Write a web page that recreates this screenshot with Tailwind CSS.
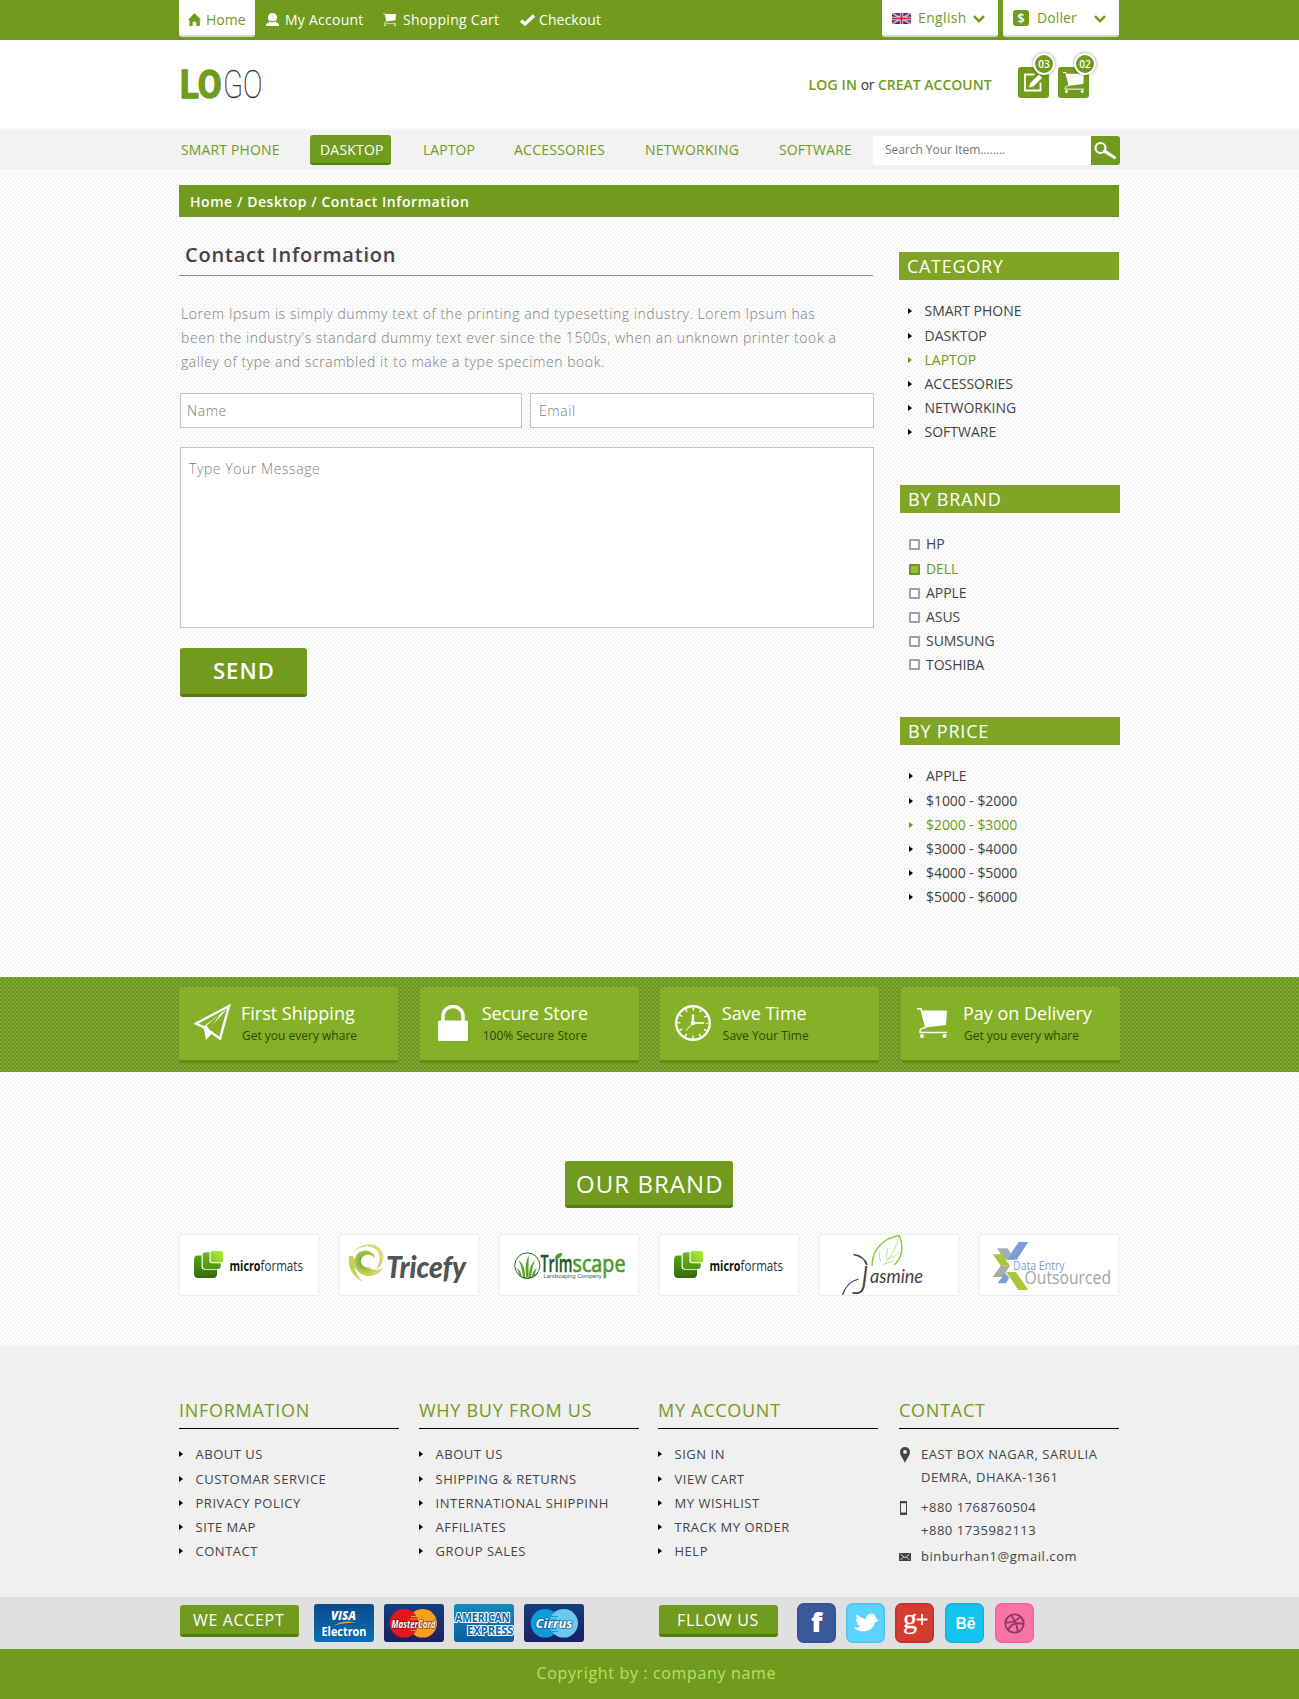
<!DOCTYPE html>
<html lang="en">
<head>
<meta charset="utf-8">
<title>Contact Information</title>
<script src="https://cdn.jsdelivr.net/npm/@tailwindcss/browser@4"></script>
</head>
<body class="font-['Open_Sans',sans-serif] text-sm text-[#444] whitespace-nowrap overflow-x-hidden bg-[#fefefe] bg-[radial-gradient(circle_at_1px_1px,#f3f3f3_0.9px,transparent_1px),radial-gradient(circle_at_1px_1px,#f7f7f7_0.9px,transparent_1px)] bg-[length:4px_4px] bg-[position:0_0,2px_2px]">

<svg class="absolute w-0 h-0">
  <symbol id="cart" viewBox="0 0 30 30">
    <path d="M0 .8h4l5 19" fill="none" stroke="currentColor" stroke-width="1.6"/>
    <path d="M4.5 2.5H30L29 17 8.5 19.5z" fill="currentColor"/>
    <path d="M8.500 19.500C4 20 2.500 22 3 24.500H30" fill="none" stroke="currentColor" stroke-width="1.4"/>
    <circle cx="5" cy="28" r="2" fill="currentColor"/><circle cx="27.500" cy="28" r="2" fill="currentColor"/>
  </symbol>
  <symbol id="arrow" viewBox="0 0 4 6"><path d="M0 0 4 3 0 6z" fill="currentColor"/></symbol>
  <symbol id="chevron" viewBox="0 0 12 8"><path d="M1 1.200 6 6.200 11 1.200" fill="none" stroke="currentColor" stroke-width="2.400"/></symbol>
  <symbol id="microformats" viewBox="0 0 140 62">
    <rect x="15" y="21.500" width="23" height="22.500" rx="4" fill="url(#mf1)"/>
    <rect x="22.500" y="17.300" width="20" height="18.500" rx="3.500" fill="#fff"/>
    <rect x="23.700" y="18.300" width="18" height="16.700" rx="3" fill="url(#mf2)"/>
    <rect x="30.500" y="16" width="14.500" height="13.300" rx="2" fill="#fff"/>
    <rect x="31.700" y="17" width="12.300" height="11.300" rx="1.500" fill="url(#mf3)"/>
    <text x="50.500" y="36.700" font-family="Open Sans" font-size="14" font-weight="700" fill="#111" textLength="31" lengthAdjust="spacingAndGlyphs">micro</text>
    <text x="81.500" y="36.700" font-family="Open Sans" font-size="14" fill="#333" textLength="42.500" lengthAdjust="spacingAndGlyphs">formats</text>
  </symbol>
  <defs>
    <linearGradient id="mf1" x1="0" y1="0" x2="0" y2="1"><stop offset="0" stop-color="#5aa314"/><stop offset="1" stop-color="#34690a"/></linearGradient>
    <linearGradient id="mf2" x1="0" y1="0" x2="0" y2="1"><stop offset="0" stop-color="#6fb81a"/><stop offset="1" stop-color="#4b9310"/></linearGradient>
    <linearGradient id="mf3" x1="1" y1="0" x2="0" y2="1"><stop offset="0" stop-color="#b9f13c"/><stop offset="1" stop-color="#7fc81c"/></linearGradient>
    <radialGradient id="swirl" gradientUnits="userSpaceOnUse" cx="26" cy="27" r="20"><stop offset="0" stop-color="#4c9a3c"/><stop offset=".55" stop-color="#b9c94a"/><stop offset="1" stop-color="#e6e08c"/></radialGradient>
    <linearGradient id="visa" x1="0" y1="0" x2="0" y2="1"><stop offset="0" stop-color="#0b4a8c"/><stop offset="1" stop-color="#0a6fb4"/></linearGradient>
    <linearGradient id="navy" x1="0" y1="0" x2="0" y2="1"><stop offset="0" stop-color="#123f7e"/><stop offset="1" stop-color="#1d1f63"/></linearGradient>
    <linearGradient id="amex" x1="0" y1="0" x2="0" y2="1"><stop offset="0" stop-color="#1689bd"/><stop offset="1" stop-color="#0b5c9e"/></linearGradient>
  </defs>
</svg>

<!-- top bar -->
<div class="h-10 bg-[#709b1d]">
  <div class="mx-auto w-[941px] flex items-start text-white leading-[39px]">
    <a class="flex w-[76px] h-[37px] pl-[9px] rounded-b-[3px] border-b-2 border-[#d6d6d6] bg-white text-[#709b1d]">
      <svg class="mt-[13px] w-[13px] h-[13px]" viewBox="0 0 13 13"><path d="M6.500 0 13 7h-1.200v6H8.300V8.700H4.700V13H1.500V7H0z" fill="currentColor"/></svg>
      <span class="ml-[5px]">Home</span>
    </a>
    <a class="flex w-[117px] pl-[11px]">
      <svg class="mt-[13px] w-[13px] h-[13px]" viewBox="0 0 13 13"><path d="M6.500 0C3.600 0 2 2 2 4.500c0 1.800.7 3.300 1.900 4.200L0 11v2h13v-2L9.100 8.700C10.300 7.800 11 6.300 11 4.500 11 2 9.400 0 6.500 0z" fill="currentColor"/><path d="M3.300 6.500c1 2.300 5.400 2.300 6.400 0-.4 4-6 4-6.400 0z" fill="#709b1d"/></svg>
      <span class="ml-[6px] tracking-[.25px]">My Account</span>
    </a>
    <a class="flex w-[137px] pl-[11px]">
      <svg class="mt-[13px] w-[13px] h-[13px]"><use href="#cart"/></svg>
      <span class="ml-[7px] tracking-[.3px]">Shopping Cart</span>
    </a>
    <a class="flex w-[373px] pl-[11px]">
      <svg class="mt-[14px] w-[15px] h-[12px]" viewBox="0 0 15 12"><path d="M1 6.500 5 10 14 1.500" fill="none" stroke="currentColor" stroke-width="3.400"/></svg>
      <span class="ml-[4px] tracking-[.1px]">Checkout</span>
    </a>
    <div class="flex w-[116px] h-[37px] pl-[10px] rounded-b-[3px] border-b-2 border-[#d6d6d6] bg-white text-[#709b1d] leading-[35px]">
      <svg class="mt-[13px] w-[19px] h-[11px]" viewBox="0 0 19 11"><path fill="#2a2f7a" d="M0 0h19v11H0z"/><path d="M0 0 19 11M19 0 0 11" stroke="#fff" stroke-width="1.800"/><path d="M0 0 19 11M19 0 0 11" stroke="#d3203c" stroke-width=".7"/><path d="M9.500 0v11M0 5.500h19" stroke="#fff" stroke-width="3.400"/><path d="M9.500 0v11M0 5.500h19" stroke="#d3203c" stroke-width="2"/></svg>
      <span class="ml-[7px] tracking-[.35px]">English</span>
      <svg class="ml-[6px] mt-[15px] w-[12px] h-[8px]"><use href="#chevron"/></svg>
    </div>
    <div class="flex ml-[5px] w-[116px] h-[37px] pl-[10px] rounded-b-[3px] border-b-2 border-[#d6d6d6] bg-white text-[#709b1d] leading-[35px]">
      <span class="mt-[10px] w-4 h-4 rounded-[3px] bg-[#709b1d] text-white text-[13px] font-semibold leading-4 text-center">$</span>
      <span class="ml-[8px] w-[57px] tracking-[.1px]">Doller</span>
      <svg class="mt-[15px] w-[12px] h-[8px]"><use href="#chevron"/></svg>
    </div>
  </div>
</div>

<!-- header -->
<header class="h-[87px] bg-white">
  <div class="mx-auto w-[941px] flex items-start">
    <svg class="mt-[24px] w-[90px] h-[40px] overflow-visible" viewBox="0 0 90 40">
      <g font-family="Roboto" font-size="39" stroke-linejoin="round">
        <text x="1" y="34" font-weight="700" fill="#709b1d" stroke="#709b1d" stroke-width="1.400" textLength="41.500" lengthAdjust="spacingAndGlyphs">LO</text>
        <text x="44" y="34" font-weight="100" fill="#333" stroke="#333" stroke-width=".3" textLength="39.500" lengthAdjust="spacingAndGlyphs">GO</text>
      </g>
    </svg>
    <div class="ml-[539.500px] mt-[32px] w-[209.500px] leading-[26px] font-semibold text-[#709b1d]"><span class="tracking-[.15px]">LOG IN</span> <span class="font-normal text-[#333] tracking-[-.3px]">or</span> CREAT ACCOUNT</div>
    <div class="relative mt-[27px] w-[31px] h-[31px] rounded-[3px] bg-[#709b1d]">
      <svg class="w-[31px] h-[31px]" viewBox="0 0 31 31"><path d="M16.500 7.500H7v16h15.500V15.500" fill="none" stroke="#fff" stroke-width="1.800"/><path d="M11 20.500 12.300 16 21 7.500l3.300 3.300-8.700 8.500z" fill="#fff"/></svg>
      <span class="absolute left-[15px] -top-[14px] w-[22px] h-[22px] rounded-full border-2 border-white bg-[#709b1d] shadow-[0_0_3px_rgba(0,0,0,.45)] text-white text-[10px] font-semibold leading-[18px] text-center">03</span>
    </div>
    <div class="relative ml-[9px] mt-[27px] w-[31px] h-[31px] rounded-[3px] bg-[#709b1d] text-white">
      <svg class="ml-[5px] mt-[5px] w-[21px] h-[21px]"><use href="#cart"/></svg>
      <span class="absolute left-[16px] -top-[14px] w-[22px] h-[22px] rounded-full border-2 border-white bg-[#709b1d] shadow-[0_0_3px_rgba(0,0,0,.45)] text-white text-[10px] font-semibold leading-[18px] text-center">02</span>
    </div>
  </div>
</header>

<!-- main navigation -->
<nav class="mt-[3px] h-10 bg-[#f2f2f2]">
  <div class="mx-auto w-[941px] flex leading-[39px] text-[#709b1d]">
    <a class="w-[131px] pl-[2px] tracking-[.15px]">SMART PHONE</a>
    <a class="mt-[5px] w-[81px] h-[30px] pl-[10px] rounded-[3px] border-b-2 border-[#567d10] bg-[#709b1d] text-white leading-[29px] tracking-[.2px]">DASKTOP</a>
    <a class="ml-[32px] w-[91px] tracking-[.05px]">LAPTOP</a>
    <a class="w-[131px] tracking-[.25px]">ACCESSORIES</a>
    <a class="w-[134px] tracking-[.25px]">NETWORKING</a>
    <a class="w-[94px] tracking-[.15px]">SOFTWARE</a>
    <div class="mt-[6px] w-[218px] h-[29px] pl-[12px] rounded-l-[3px] bg-white text-xs leading-[28px] tracking-[-.04px] text-[#777]">Search Your Item........</div>
    <div class="mt-[6px] w-[29px] h-[29px] rounded-r-[3px] bg-[#709b1d]">
      <svg class="w-[29px] h-[29px]" viewBox="0 0 29 29" fill="none" stroke="#fff"><circle cx="9.500" cy="12" r="5" stroke-width="2.200"/><path d="M13.500 15.200 23.500 21.500" stroke-width="3.200" stroke-linecap="round"/></svg>
    </div>
  </div>
</nav>

<main class="mx-auto w-[941px] h-[807px] pt-[15px]">
  <div class="w-[940px] h-8 pl-[11px] bg-[#709b1d] text-white font-semibold leading-[33px] tracking-[.56px]">Home / Desktop / Contact Information</div>
  <div class="flex">
    <section class="w-[720px]">
      <h1 class="mt-[22px] w-[694px] h-[37px] pl-[6px] border-b border-[#8e8e8e] text-[20px] leading-[32px] font-semibold tracking-[.8px] text-[#444]">Contact Information</h1>
      <p class="mt-[26px] pl-[2px] leading-6 font-light tracking-[.56px] text-[#808080]">Lorem Ipsum is simply dummy text of the printing and typesetting industry. Lorem Ipsum has<br>been the industry's standard dummy text ever since the 1500s, when an unknown printer took a<br>galley of type and scrambled it to make a type specimen book.</p>
      <div class="mt-[19px] ml-[1px] flex gap-2 font-light tracking-[.57px] text-[#808080]">
        <div class="w-[342px] h-[35px] pl-[6px] border border-[#c4c4c4] bg-white leading-[33px]">Name</div>
        <div class="w-[344px] h-[35px] pl-[8px] border border-[#c4c4c4] bg-white leading-[33px]">Email</div>
      </div>
      <div class="mt-[19px] ml-[1px] w-[694px] h-[181px] pl-[8px] pt-[9px] border border-[#c4c4c4] bg-white leading-6 font-light tracking-[.57px] text-[#808080]">Type Your Message</div>
      <div class="mt-[20px] ml-[1px] w-[127px] h-[49px] pl-[1px] rounded-[3px] border-b-3 border-[#567d10] bg-[#709b1d] text-white text-[22px] font-semibold leading-[45px] text-center tracking-[1.100px]">SEND</div>
    </section>

    <aside class="pt-[35px]">
      <section class="h-[233px]">
        <h2 class="w-[220px] h-7 pl-[8px] bg-[#80a524] text-white text-lg leading-[29px] tracking-[.7px]">CATEGORY</h2>
        <ul class="mt-[19px] leading-6 pl-[9px]">
          <li class="flex items-center gap-[12.500px] mb-px"><svg class="w-1 h-1.5 text-black"><use href="#arrow"/></svg>SMART PHONE</li>
          <li class="flex items-center gap-[12.500px]"><svg class="w-1 h-1.5 text-black"><use href="#arrow"/></svg>DASKTOP</li>
          <li class="flex items-center gap-[12.500px] text-[#709b1d]"><svg class="w-1 h-1.5"><use href="#arrow"/></svg>LAPTOP</li>
          <li class="flex items-center gap-[12.500px]"><svg class="w-1 h-1.5 text-black"><use href="#arrow"/></svg>ACCESSORIES</li>
          <li class="flex items-center gap-[12.500px]"><svg class="w-1 h-1.5 text-black"><use href="#arrow"/></svg>NETWORKING</li>
          <li class="flex items-center gap-[12.500px]"><svg class="w-1 h-1.5 text-black"><use href="#arrow"/></svg>SOFTWARE</li>
        </ul>
      </section>
      <section class="ml-px h-[232px]">
        <h2 class="w-[220px] h-7 pl-[8px] bg-[#80a524] text-white text-lg leading-[29px] tracking-[.8px]">BY BRAND</h2>
        <ul class="mt-[19px] leading-6 pl-[9px] tracking-[-.05px]">
          <li class="flex items-center gap-[6px] mb-px"><i class="mt-px w-[11px] h-[11px] border-2 border-[#a3a3a3] bg-white rounded-[1px]"></i>HP</li>
          <li class="flex items-center gap-[6px] text-[#709b1d]"><i class="mt-px w-[11px] h-[11px] border-2 border-[#6f8f3a] bg-[#93c71c] rounded-[1px]"></i>DELL</li>
          <li class="flex items-center gap-[6px]"><i class="mt-px w-[11px] h-[11px] border-2 border-[#a3a3a3] bg-white rounded-[1px]"></i>APPLE</li>
          <li class="flex items-center gap-[6px]"><i class="mt-px w-[11px] h-[11px] border-2 border-[#a3a3a3] bg-white rounded-[1px]"></i>ASUS</li>
          <li class="flex items-center gap-[6px]"><i class="mt-px w-[11px] h-[11px] border-2 border-[#a3a3a3] bg-white rounded-[1px]"></i>SUMSUNG</li>
          <li class="flex items-center gap-[6px]"><i class="-mt-px w-[11px] h-[11px] border-2 border-[#a3a3a3] bg-white rounded-[1px]"></i>TOSHIBA</li>
        </ul>
      </section>
      <section class="ml-px">
        <h2 class="w-[220px] h-7 pl-[8px] bg-[#80a524] text-white text-lg leading-[29px] tracking-[.8px]">BY PRICE</h2>
        <ul class="mt-[19px] leading-6 pl-[9px] tracking-[-.05px]">
          <li class="flex items-center gap-[13px] mb-px"><svg class="w-1 h-1.5 text-black"><use href="#arrow"/></svg>APPLE</li>
          <li class="flex items-center gap-[13px]"><svg class="w-1 h-1.5 text-black"><use href="#arrow"/></svg>$1000 - $2000</li>
          <li class="flex items-center gap-[13px] text-[#709b1d]"><svg class="w-1 h-1.5"><use href="#arrow"/></svg>$2000 - $3000</li>
          <li class="flex items-center gap-[13px]"><svg class="w-1 h-1.5 text-black"><use href="#arrow"/></svg>$3000 - $4000</li>
          <li class="flex items-center gap-[13px]"><svg class="w-1 h-1.5 text-black"><use href="#arrow"/></svg>$4000 - $5000</li>
          <li class="flex items-center gap-[13px]"><svg class="w-1 h-1.5 text-black"><use href="#arrow"/></svg>$5000 - $6000</li>
        </ul>
      </section>
    </aside>
  </div>
</main>

<!-- services -->
<section class="h-[95px] pt-[10px] bg-[#6b951b] bg-[radial-gradient(circle_at_1px_1px,#80a93a_0.9px,transparent_1px),radial-gradient(circle_at_1px_1px,#7ba332_0.9px,transparent_1px)] bg-[length:4px_4px] bg-[position:0_0,2px_2px]">
  <div class="mx-auto w-[941px] flex justify-between text-white">
    <div class="flex w-[219px] h-[76px] rounded-[3px] border-b-3 border-[#638c17] bg-[#84b128]">
      <div class="w-[62px] pl-[15px] pt-[17px]"><svg class="w-[37px] h-[37px]" viewBox="0 0 37 37"><path d="M35 2 2 19.500 9.500 23 26 34.500z" fill="none" stroke="#fff" stroke-width="2.400"/><path d="M34 4 9.500 22.500 12 36 19 28 14.500 25.500z" fill="#fff"/><path d="M27 9 12.500 21.500 15.500 25.500z" fill="#84b128"/></svg></div>
      <div class="pt-[14px]"><h3 class="text-lg leading-6">First Shipping</h3><p class="mt-px pl-px text-xs leading-5 text-[#2c4a05]">Get you every whare</p></div>
    </div>
    <div class="flex w-[219px] h-[76px] rounded-[3px] border-b-3 border-[#638c17] bg-[#84b128]">
      <div class="w-[62px] pl-[18px] pt-[18px]"><svg class="w-[30px] h-[36px]" viewBox="0 0 30 36"><rect y="15.500" width="30" height="20.500" rx="1.500" fill="#fff"/><path d="M5 17v-6a10 9.500 0 0 1 20 0v6" fill="none" stroke="#fff" stroke-width="3.500"/></svg></div>
      <div class="pt-[14px]"><h3 class="text-lg leading-6">Secure Store</h3><p class="mt-px pl-px text-xs leading-5 text-[#2c4a05]">100% Secure Store</p></div>
    </div>
    <div class="flex w-[219px] h-[76px] rounded-[3px] border-b-3 border-[#638c17] bg-[#84b128]">
      <div class="w-[61.500px] pl-[15px] pt-[18px]"><svg class="w-[36px] h-[36px]" viewBox="0 0 36 36" fill="none" stroke="#fff"><circle cx="18" cy="18" r="16.800" stroke-width="2.400"/><circle cx="18" cy="18" r="14" stroke-width="3" stroke-dasharray="1.400 5.930" stroke-dashoffset=".7"/><path d="M18 18V9.500" stroke-width="2.400"/><path d="M18 18h11" stroke-width="1.600"/><path d="m18 18-7 7.500" stroke-width="1"/><circle cx="18" cy="18" r="2.200" fill="#fff" stroke="none"/></svg></div>
      <div class="pt-[14px]"><h3 class="text-lg leading-6">Save Time</h3><p class="mt-px pl-px text-xs leading-5 text-[#2c4a05]">Save Your Time</p></div>
    </div>
    <div class="flex w-[219px] h-[76px] rounded-[3px] border-b-3 border-[#638c17] bg-[#84b128]">
      <div class="w-[62px] pl-[16px] pt-[21px]"><svg class="w-[30px] h-[30px]"><use href="#cart"/></svg></div>
      <div class="pt-[14px]"><h3 class="text-lg leading-6">Pay on Delivery</h3><p class="mt-px pl-px text-xs leading-5 text-[#2c4a05]">Get you every whare</p></div>
    </div>
  </div>
</section>

<!-- brands -->
<section class="mx-auto w-[941px] h-[274px] pt-[89px]">
  <h2 class="ml-[386px] w-[168px] h-[47px] pl-[11px] rounded-[3px] border-b-3 border-[#567d10] bg-[#709b1d] text-white text-2xl leading-[45px] tracking-[1.050px]">OUR BRAND</h2>
  <div class="mt-[26px] flex gap-5">
    <div class="w-[140px] h-[62px] rounded-[2px] bg-white outline outline-[#ececec] -outline-offset-1"><svg class="w-[140px] h-[62px]"><use href="#microformats"/></svg></div>
    <div class="w-[140px] h-[62px] rounded-[2px] bg-white outline outline-[#ececec] -outline-offset-1">
      <svg class="w-[140px] h-[62px]" viewBox="0 0 140 62">
        <path d="M34 33c-7 2-12-1-12-6 0-6 8-9 14-3-1-9-16-11-20 0-3 10 5 19 16 18 6-1 10-4 12-8-7 3-13 2-15-1 2 1 4 1 5 0z" fill="url(#swirl)"/>
        <path d="M14 19C21 8 39 7 43 20c2 7 0 12-6 15 3-5 5-9 3-15-4-10-18-10-26-1z" fill="url(#swirl)"/>
        <path d="M10 22c-1 12 3 20 14 26-7-7-9-12-8-22l-2-4z" fill="#c6cf58"/>
        <path d="M31 9c9 2 14 8 14 17-2-8-6-13-14-17z" fill="#e0dc90"/>
        <text x="47" y="44" font-family="Lato" font-size="31" font-weight="900" font-style="italic" fill="#4d5653" textLength="80" lengthAdjust="spacingAndGlyphs">Tricefy</text>
      </svg>
    </div>
    <div class="w-[140px] h-[62px] rounded-[2px] bg-white outline outline-[#ececec] -outline-offset-1">
      <svg class="w-[140px] h-[62px]" viewBox="0 0 140 62">
        <circle cx="28.300" cy="31.500" r="12.600" fill="#fff" stroke="#2c6a35" stroke-width="1"/>
        <path d="M18 38c4 8 16 8 21 0-2 8-18 10-21 0z" fill="#1f5a2b"/>
        <path d="M26 43c0-9-2-14-7-17 3 4 4 9 5 17zM27 43c-1-10 0-17 3-22-1 7 0 13-.5 22zM30 43c0-8 2-13 6-17-2 5-3 10-4 17zM23 43c-1-5-3-8-6-9 2 2 3 5 4 9zM33 43c0-4 2-7 5-9-1 3-2 5-3 9z" fill="#5aa02c"/>
        <text x="41.500" y="37.500" font-family="Open Sans" font-size="23" font-weight="600" fill="#1f5a2b" stroke="#1f5a2b" stroke-width=".4" textLength="32" lengthAdjust="spacingAndGlyphs">Trım</text>
        <text x="73.500" y="37.500" font-family="Open Sans" font-size="23" font-weight="400" fill="#4c9a2a" stroke="#4c9a2a" stroke-width=".7" textLength="53" lengthAdjust="spacingAndGlyphs">scape</text>
        <path d="M56 25c0-4 3-6 7-6 0 4-3 6-7 6z" fill="#4c9a2a"/>
        <text x="44.500" y="43.800" font-family="Liberation Sans" font-size="6" fill="#3b5a40" textLength="58" lengthAdjust="spacingAndGlyphs">Landscaping Company</text>
      </svg>
    </div>
    <div class="w-[140px] h-[62px] rounded-[2px] bg-white outline outline-[#ececec] -outline-offset-1"><svg class="w-[140px] h-[62px]"><use href="#microformats"/></svg></div>
    <div class="w-[140px] h-[62px] rounded-[2px] bg-white outline outline-[#ececec] -outline-offset-1">
      <svg class="w-[140px] h-[62px] overflow-visible" viewBox="0 0 140 62" fill="none">
        <path d="M53 32C53 16 64 4 80.500 1.500 85 14 83 24 75 31" stroke="#93c83e" stroke-width="1.500"/>
        <path d="M80 2C78 12 72 22 65 31M62 28c-2-4-2-7-1-11M68 26c-1-5 0-8 1-12M70 25c4-2 7-3 9-6M66 30c4-1 6-2 9-4" stroke="#b7dc84" stroke-width=".9"/>
        <path d="M23.500 61C26 53 32 47 39.500 45" stroke="#444" stroke-width="1.200"/>
        <path d="M34.500 20.500C41 21.500 46 25 48 31" stroke="#444" stroke-width="1.700"/>
        <text x="34" y="60" font-family="Lato" font-size="40" font-style="italic" font-weight="300" fill="#444" textLength="16" lengthAdjust="spacingAndGlyphs">J</text>
        <text x="51" y="49" font-family="Lato" font-size="20" font-style="italic" fill="#444" textLength="53" lengthAdjust="spacingAndGlyphs">asmine</text>
      </svg>
    </div>
    <div class="w-[140px] h-[62px] rounded-[2px] bg-white outline outline-[#ececec] -outline-offset-1">
      <svg class="w-[140px] h-[62px]" viewBox="0 0 140 62">
        <path d="M18.300 14.300h10.400L32 20l-4.300 5.700-3.200-.7z" fill="#a9abad"/>
        <path d="M39.700 8h9.600L37.700 25.700h-10z" fill="#7b9fd4"/>
        <path d="M13.700 20.300h9L31 31.700h-9.300z" fill="#a4ca39"/>
        <path d="M21.700 31.700H31L23.700 43h-10z" fill="#a9abad"/>
        <path d="m26 38.700 4.300 5-3.300 5.600h-8.300z" fill="#7b9fd4"/>
        <path d="M27.300 38H37l12.300 18h-10z" fill="#a4ca39"/>
        <text x="34" y="35.500" font-family="Open Sans" font-size="12" fill="#7b9fd4" textLength="51.500" lengthAdjust="spacingAndGlyphs">Data Entry</text>
        <text x="45.500" y="50" font-family="Open Sans" font-size="17.500" fill="#a3a5a8" textLength="86.500" lengthAdjust="spacingAndGlyphs">Outsourced</text>
      </svg>
    </div>
  </div>
</section>

<!-- footer links -->
<footer>
  <div class="h-[251px] bg-[#f0f0f0]">
    <div class="mx-auto w-[941px] pt-[52px] flex text-[13px] leading-6 tracking-[.52px]">
      <section class="w-[240px]">
        <h4 class="w-[220px] h-[31px] border-b border-black text-lg leading-6 tracking-[.72px] text-[#709b1d]">INFORMATION</h4>
        <ul class="mt-[13px]">
          <li class="flex items-center gap-[12.500px] mb-px"><svg class="w-1 h-1.5 text-black"><use href="#arrow"/></svg>ABOUT US</li>
          <li class="flex items-center gap-[12.500px]"><svg class="w-1 h-1.5 text-black"><use href="#arrow"/></svg>CUSTOMAR SERVICE</li>
          <li class="flex items-center gap-[12.500px]"><svg class="w-1 h-1.5 text-black"><use href="#arrow"/></svg>PRIVACY POLICY</li>
          <li class="flex items-center gap-[12.500px]"><svg class="w-1 h-1.5 text-black"><use href="#arrow"/></svg>SITE MAP</li>
          <li class="flex items-center gap-[12.500px]"><svg class="w-1 h-1.5 text-black"><use href="#arrow"/></svg>CONTACT</li>
        </ul>
      </section>
      <section class="w-[239px]">
        <h4 class="w-[220px] h-[31px] border-b border-black text-lg leading-6 tracking-[.72px] text-[#709b1d]">WHY BUY FROM US</h4>
        <ul class="mt-[13px]">
          <li class="flex items-center gap-[12.500px] mb-px"><svg class="w-1 h-1.5 text-black"><use href="#arrow"/></svg>ABOUT US</li>
          <li class="flex items-center gap-[12.500px]"><svg class="w-1 h-1.5 text-black"><use href="#arrow"/></svg>SHIPPING &amp; RETURNS</li>
          <li class="flex items-center gap-[12.500px]"><svg class="w-1 h-1.5 text-black"><use href="#arrow"/></svg>INTERNATIONAL SHIPPINH</li>
          <li class="flex items-center gap-[12.500px]"><svg class="w-1 h-1.5 text-black"><use href="#arrow"/></svg>AFFILIATES</li>
          <li class="flex items-center gap-[12.500px]"><svg class="w-1 h-1.5 text-black"><use href="#arrow"/></svg>GROUP SALES</li>
        </ul>
      </section>
      <section class="w-[241px]">
        <h4 class="w-[220px] h-[31px] border-b border-black text-lg leading-6 tracking-[.72px] text-[#709b1d]">MY ACCOUNT</h4>
        <ul class="mt-[13px]">
          <li class="flex items-center gap-[12.500px] mb-px"><svg class="w-1 h-1.5 text-black"><use href="#arrow"/></svg>SIGN IN</li>
          <li class="flex items-center gap-[12.500px]"><svg class="w-1 h-1.5 text-black"><use href="#arrow"/></svg>VIEW CART</li>
          <li class="flex items-center gap-[12.500px]"><svg class="w-1 h-1.5 text-black"><use href="#arrow"/></svg>MY WISHLIST</li>
          <li class="flex items-center gap-[12.500px]"><svg class="w-1 h-1.5 text-black"><use href="#arrow"/></svg>TRACK MY ORDER</li>
          <li class="flex items-center gap-[12.500px]"><svg class="w-1 h-1.5 text-black"><use href="#arrow"/></svg>HELP</li>
        </ul>
      </section>
      <section class="leading-[23px]">
        <h4 class="w-[220px] h-[31px] border-b border-black text-lg leading-6 tracking-[.75px] text-[#709b1d]">CONTACT</h4>
        <div class="mt-[14px] flex">
          <svg class="mt-[4px] w-[22px] h-[16px]" viewBox="0 0 22 16"><path fill-rule="evenodd" d="M6 0a5 5 0 0 0-5 5c0 3.500 3.500 7 5 11 1.500-4 5-7.500 5-11a5 5 0 0 0-5-5zm0 3a1.900 1.900 0 1 1 0 3.800A1.900 1.900 0 0 1 6 3z" fill="#444"/></svg>
          <p>EAST BOX NAGAR, SARULIA<br>DEMRA, DHAKA-1361</p>
        </div>
        <div class="mt-[7px] flex">
          <svg class="mt-[5px] w-[22px] h-[14px]" viewBox="0 0 22 14"><path fill-rule="evenodd" d="M1 0h7v14H1zM2 2.200v9.400h5V2.200z" fill="#444"/></svg>
          <p>+880 1768760504<br>+880 1735982113</p>
        </div>
        <div class="mt-[3px] flex">
          <svg class="mt-[8px] w-[22px] h-[8px]" viewBox="0 0 22 8"><path d="M0 0h12v8H0z" fill="#444"/><path d="m1.500 1.200 4.500 3.500 4.500-3.500M1.500 7 4.500 4M10.500 7l-3-3" fill="none" stroke="#f0f0f0" stroke-width=".8"/></svg>
          <p class="tracking-[.55px]">binburhan1@gmail.com</p>
        </div>
      </section>
    </div>
  </div>

  <div class="h-[52px] bg-[#e0e0e0]">
    <div class="mx-auto w-[941px] flex items-start text-white">
      <div class="ml-px mt-2 w-[119px] h-8 rounded-[3px] border-b-3 border-[#567d10] bg-[#709b1d] pl-[13px] text-base leading-[30px] tracking-[.66px]">WE ACCEPT</div>
      <div class="ml-[15px] mt-[7px] flex gap-[10px]">
        <svg class="w-[60px] h-[38px] rounded-[3px]" viewBox="0 0 60 38">
          <rect width="60" height="38" fill="url(#visa)"/>
          <text x="17" y="15.500" font-family="Open Sans" font-size="12.500" font-weight="800" font-style="italic" fill="#fff" textLength="25" lengthAdjust="spacingAndGlyphs">VISA</text>
          <path d="M20 21.500C26 17.500 34 16.500 42 18.200 34 18.800 27 19.500 20 21.500z" fill="#f5a623"/>
          <text x="7.500" y="31.500" font-family="Open Sans" font-size="11.500" font-weight="700" fill="#fff" textLength="45" lengthAdjust="spacingAndGlyphs">Electron</text>
        </svg>
        <svg class="w-[60px] h-[38px] rounded-[3px]" viewBox="0 0 60 38">
          <rect width="60" height="38" fill="url(#navy)"/>
          <circle cx="38.700" cy="19.300" r="14.300" fill="#f9a01b"/><circle cx="20" cy="19.300" r="14.300" fill="#e8141b"/>
          <path d="M27 12.500h7M26 15h8M26 24h8M27 26.500h6" stroke="#f9a01b" stroke-width="1"/>
          <text x="7.500" y="23.500" font-family="Open Sans" font-size="10.500" font-weight="700" font-style="italic" fill="#fff" stroke="#4a1020" stroke-width="1.200" paint-order="stroke" textLength="44" lengthAdjust="spacingAndGlyphs">MasterCard</text>
        </svg>
        <svg class="w-[60px] h-[38px] rounded-[3px]" viewBox="0 0 60 38">
          <rect width="60" height="38" fill="url(#amex)"/>
          <g font-family="Open Sans" font-size="12" font-weight="700" fill="#0b69a8" stroke="#fff" stroke-width="2.200" paint-order="stroke">
            <text x="1" y="18" textLength="55" lengthAdjust="spacingAndGlyphs">AMERICAN</text>
            <text x="13" y="31" textLength="46.500" lengthAdjust="spacingAndGlyphs">EXPRESS</text>
          </g>
        </svg>
        <svg class="w-[60px] h-[38px] rounded-[3px]" viewBox="0 0 60 38">
          <rect width="60" height="38" fill="url(#navy)"/>
          <circle cx="21" cy="19.300" r="14.300" fill="#0f9ad8"/><circle cx="39.700" cy="19.300" r="14.300" fill="#6ac8f3"/>
          <path d="M26 12.500h8M26 15h7M26 25h7M27 27.500h7" stroke="#0f9ad8" stroke-width="1"/>
          <text x="11.500" y="24" font-family="Open Sans" font-size="13" font-weight="700" font-style="italic" fill="#fff" stroke="#12407c" stroke-width="1.200" paint-order="stroke" textLength="37" lengthAdjust="spacingAndGlyphs">Cirrus</text>
        </svg>
      </div>
      <div class="ml-[75px] mt-2 w-[119px] h-8 rounded-[3px] border-b-3 border-[#567d10] bg-[#709b1d] pl-[18px] text-base leading-[30px] tracking-[.64px]">FLLOW US</div>
      <div class="ml-[19px] mt-[6px] flex gap-[10px]">
        <svg class="w-[39px] h-[40px]" viewBox="0 0 39 40">
          <rect x=".75" y=".75" width="37.500" height="38.500" rx="6" fill="#3b5998" stroke="#2f4fa3" stroke-width="1.500"/>
          <text x="14" y="29" font-family="Open Sans" font-size="26" font-weight="800" fill="#fff" textLength="11.500" lengthAdjust="spacingAndGlyphs">f</text>
        </svg>
        <svg class="w-[39px] h-[40px]" viewBox="0 0 39 40">
          <rect x=".75" y=".75" width="37.500" height="38.500" rx="6" fill="#5ad4ff" stroke="#4cc3ee" stroke-width="1.500"/>
          <path transform="translate(7 9.500) scale(.95 .9)" fill="#fff" d="M26.500 9.500a6 6 0 0 1-3.600 1.300C22 17 17 21 10.500 21c-4 0-7.500-1.500-10-4.500 3 .8 5.500.4 7.500-1.200-2.200-.5-3.500-1.600-4-3.300h2C4 11 3 9.500 3.200 7l2 .6C3.500 6 3.200 4 4.200 2c3 3.200 5.500 4.600 9.300 5.400C13.800 3.500 16 1.200 19 1c2.200 0 3.800 1.200 4.500 3.500.6 1.700 1.500 3 3 4z"/>
        </svg>
        <svg class="w-[39px] h-[40px]" viewBox="0 0 39 40">
          <rect x=".75" y=".75" width="37.500" height="38.500" rx="6" fill="#d63b30" stroke="#c02f28" stroke-width="1.500"/>
          <text x="8" y="25" font-family="Liberation Serif" font-size="28" fill="#fff" stroke="#fff" stroke-width=".3">g</text>
          <path d="M27 11v11M21.500 16.500H32.500" stroke="#fff" stroke-width="1.800"/>
        </svg>
        <svg class="ml-px w-[39px] h-[40px]" viewBox="0 0 39 40">
          <rect x=".75" y=".75" width="37.500" height="38.500" rx="6" fill="#13c4f0" stroke="#0fb2de" stroke-width="1.500"/>
          <text x="10.500" y="26" font-family="Liberation Sans" font-size="16" font-weight="700" fill="#fff" textLength="20" lengthAdjust="spacingAndGlyphs">Bē</text>
        </svg>
        <svg class="ml-px w-[39px] h-[40px]" viewBox="0 0 39 40">
          <rect x=".75" y=".75" width="37.500" height="38.500" rx="6" fill="#f973a6" stroke="#ff5d9c" stroke-width="1.500"/>
          <g fill="none" stroke="#8c3a62" stroke-width="1.800"><circle cx="19.500" cy="20.500" r="9.200"/><path d="M16 12c4 5 6 10 7 17M10.500 19.500c6 .3 11-1.200 14.800-6M13 27c3-6 8.500-8 15.500-5.800"/></g>
        </svg>
      </div>
    </div>
  </div>

  <div class="h-[50px] bg-[#709b1d]">
    <div class="mx-auto w-[941px] pl-[357.500px] text-base leading-[48px] tracking-[.65px] text-[#b4e567]">Copyright by : company name</div>
  </div>
</footer>
</body>
</html>
